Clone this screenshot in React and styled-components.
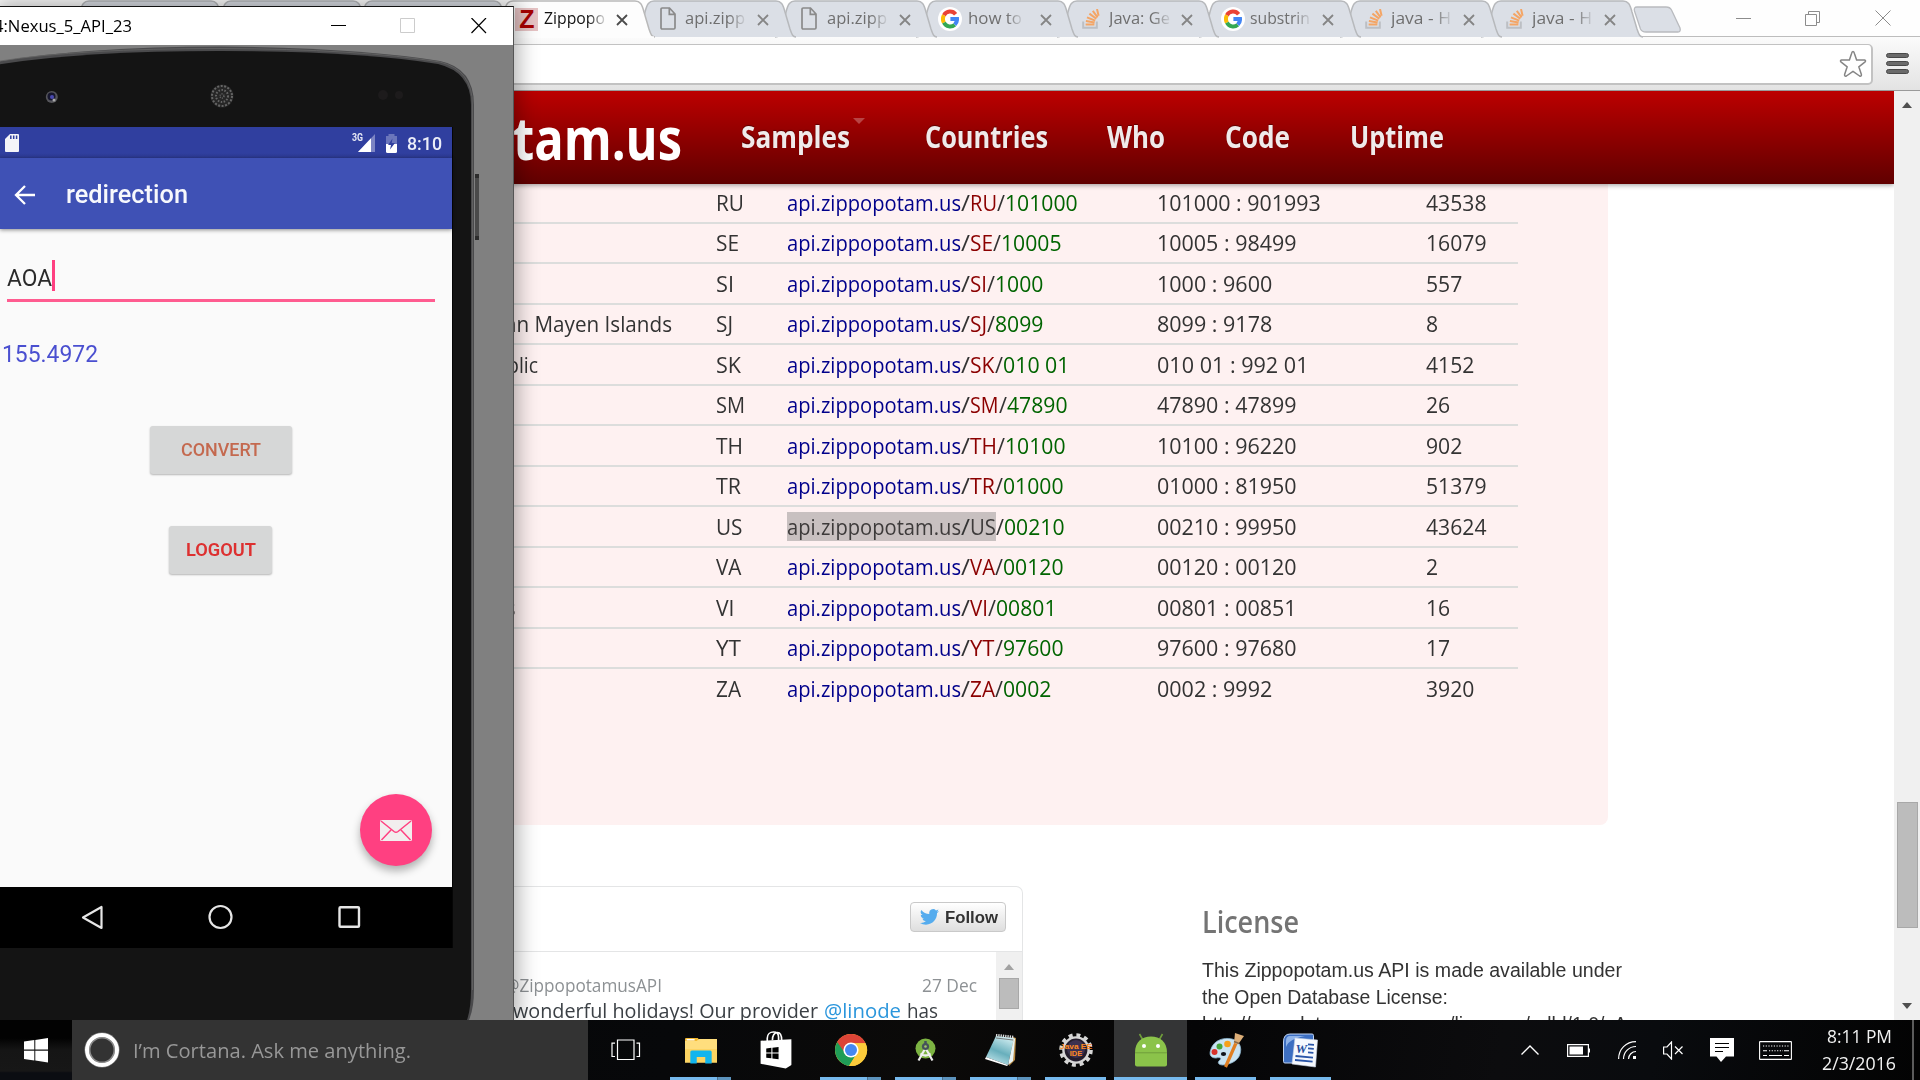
import React, { useLayoutEffect, useRef } from "react";
import styled, { createGlobalStyle, css } from "styled-components";

const SANS = '"Open Sans", "Noto Sans", sans-serif';
const ARIAL = '"Liberation Sans", Arial, sans-serif';
const ROBOTO = 'Roboto, "Noto Sans", sans-serif';

const GlobalStyle = createGlobalStyle`
  *, *::before, *::after { box-sizing: border-box; }
  html, body { margin: 0; padding: 0; background: #000; overflow: hidden; }
  svg { display: block; flex: none; }
`;

/* ---------- text that is condensed to a given width ---------- */

const FitBox = styled.span`
  display: block;
  flex: none;
  width: ${(p) => p.$w}px;
  height: ${(p) => p.$h}px;
  line-height: ${(p) => p.$h}px;
  font-family: ${(p) => p.$font || SANS};
  font-size: ${(p) => p.$size}px;
  font-weight: ${(p) => p.$weight || 400};
  color: ${(p) => p.$color || "#333"};
  white-space: pre;
`;

const FitInner = styled.span`
  display: inline-block;
  transform-origin: 0 50%;
`;

function Fit({ w, h = 30, size, weight, color, font, className, children }) {
  const ref = useRef(null);
  useLayoutEffect(() => {
    const el = ref.current;
    el.style.transform = "none";
    const natural = el.getBoundingClientRect().width;
    if (natural > 0) el.style.transform = `scaleX(${w / natural})`;
  }, [w, children]);
  return (
    <FitBox className={className} $w={w} $h={h} $size={size} $weight={weight} $color={color} $font={font}>
      <FitInner ref={ref}>{children}</FitInner>
    </FitBox>
  );
}

/* ---------- desktop ---------- */

const Desktop = styled.div`
  position: relative;
  width: 1920px;
  height: 1080px;
  overflow: hidden;
  display: flex;
  flex-direction: column;
  font-family: ${SANS};
`;

const Browser = styled.div`
  height: 1020px;
  display: flex;
  flex-direction: column;
  background: #fff;
  overflow: hidden;
`;

/* ---------- tab strip ---------- */

const TabStrip = styled.div`
  height: 36px;
  flex: none;
  display: flex;
  align-items: flex-start;
  padding-left: 69.4px;
  background: #fefefe;
  position: relative;
  z-index: 1;
`;

const Tab = styled.div`
  position: relative;
  z-index: ${(p) => p.$z};
  flex: none;
  width: 141.15px;
  height: 37px;
  display: flex;
  align-items: center;
  padding-left: 21px;
`;

const TabShape = styled.svg`
  position: absolute;
  left: 0;
  top: 0;
`;

const TabIcon = styled.span`
  position: relative;
  width: 26px;
  height: 36px;
  display: flex;
  align-items: center;
  justify-content: center;
  margin-right: 4.5px;
`;

const TabTitle = styled(Fit)`
  position: relative;
  top: -1px;
  margin-right: 11px;
  -webkit-mask-image: linear-gradient(90deg, #000 72%, rgba(0, 0, 0, 0.15) 100%);
  mask-image: linear-gradient(90deg, #000 72%, rgba(0, 0, 0, 0.15) 100%);
`;

const ZBadge = styled.span`
  width: 23px;
  height: 23px;
  margin-top: 1px;
  background: #e6c3c4;
  color: #a80000;
  font: 700 25px/23px ${ARIAL};
  text-align: center;
`;

const GBadge = styled.span`
  width: 24px;
  height: 24px;
  margin-top: 1px;
  border-radius: 50%;
  background: #fff;
  display: flex;
  align-items: center;
  justify-content: center;
`;

const TabClose = styled.svg`
  position: relative;
  margin-top: 2px;
`;

const NewTab = styled.svg`
  margin: 6px 0 0 11px;
`;

const WindowControls = styled.div`
  display: flex;
  gap: 54px;
  margin: 10px 0 0 54px;
`;

const GoogleG = () => (
  <svg width="18" height="20" viewBox="0 0 18 20" fill="none" strokeWidth="4">
    <path d="M14.6 5.2A7.2 7.6 0 0 0 2.9 6.3" stroke="#ea4335" />
    <path d="M2.9 6.3A7.4 7.6 0 0 0 2.9 13.6" stroke="#fbbc05" />
    <path d="M2.9 13.6A7.2 7.6 0 0 0 13.8 15.7" stroke="#34a853" />
    <path d="M13.8 15.7A7 7.4 0 0 0 16 9.9H9.4" stroke="#4285f4" />
  </svg>
);

const PageGlyph = () => (
  <svg width="16" height="23" viewBox="0 0 16 23" fill="none" stroke="#8a8a8a" strokeWidth="1.7">
    <path d="M1 2.2Q1 1 2.2 1H9.5L15 7V20.8Q15 22 13.8 22H2.2Q1 22 1 20.8ZM9.3 1V7.3H15" />
  </svg>
);

const StackGlyph = () => (
  <svg width="18" height="20" viewBox="0 0 18 20" fill="none">
    <path d="M1.2 12.5V18.8H14.8V12.5" stroke="#bcbfc4" strokeWidth="2" />
    <path
      d="M3.6 15.6H12.4M3.9 12L12.6 13.6M5 8.3L13.2 11.7M7.4 4.6L14.3 9.8M10.8 1.8L15.6 8.4M15 0L16.6 6.8"
      stroke="#f4a565"
      strokeWidth="2"
    />
  </svg>
);

const tabIcons = {
  z: <ZBadge>Z</ZBadge>,
  page: <PageGlyph />,
  g: (
    <GBadge>
      <GoogleG />
    </GBadge>
  ),
  so: <StackGlyph />,
};

const TABS = [
  { icon: "z", title: "Zippopo", w: 61, active: true },
  { icon: "page", title: "api.zipp", w: 60 },
  { icon: "page", title: "api.zipp", w: 60 },
  { icon: "g", title: "how to", w: 54 },
  { icon: "so", title: "Java: Ge", w: 61 },
  { icon: "g", title: "substrin", w: 60 },
  { icon: "so", title: "java - H", w: 60 },
  { icon: "so", title: "java - H", w: 60 },
];

function BrowserTab({ tab, z }) {
  const fill = tab && tab.active ? "#fdfdfd" : "#dbdfe6";
  return (
    <Tab $z={z}>
      <TabShape width="164" height="38" viewBox="0 0 164 38">
        <path
          d="M0 37C4 37 5 34 7 28L11 12C13 4 15 1 20 1H142C147 1 149 4 151 12L156 29C158 35 159 37 162 37"
          fill={fill}
          stroke={tab && tab.active ? "#b9b9b9" : "#b7b9bc"}
          strokeWidth="1.5"
        />
        {tab && tab.active && <path d="M3 37.5H161" stroke="#fdfdfd" strokeWidth="2.4" />}
      </TabShape>
      {tab && (
        <>
          <TabIcon>{tabIcons[tab.icon]}</TabIcon>
          <TabTitle w={tab.w} h={37} size={16.8} color={tab.active ? "#111" : "#6f6f6f"}>
            {tab.title}
          </TabTitle>
          <TabClose
            width="12"
            height="12"
            viewBox="0 0 12 12"
            stroke={tab.active ? "#4c4c4c" : "#858585"}
            strokeWidth="1.8"
            style={{ marginLeft: 61 - tab.w }}
          >
            <path d="M1 1L11 11M11 1L1 11" />
          </TabClose>
        </>
      )}
    </Tab>
  );
}

/* ---------- toolbar ---------- */

const Toolbar = styled.div`
  height: 55px;
  flex: none;
  display: flex;
  align-items: flex-start;
  padding-top: 7px;
  border-top: 1px solid #bdbdbd;
  border-bottom: 1px solid #9a9a9a;
  background: linear-gradient(#fbfbfb, #e3e3e3);
`;

const AddressBar = styled.div`
  width: 1873px;
  height: 41px;
  background: #fff;
  border: 2px solid #c2c2c2;
  border-top-width: 1px;
  border-radius: 5px;
  display: flex;
  justify-content: flex-end;
  padding: 5px 4px 0 0;
`;

const MenuButton = styled.div`
  display: flex;
  flex-direction: column;
  gap: 2.5px;
  margin: 9px 0 0 13px;
`;

const MenuBar = styled.span`
  width: 23px;
  height: 5.3px;
  border-radius: 2.5px;
  background: #6a6a6a;
  border: 1px solid #484848;
`;

/* ---------- page ---------- */

const PageRow = styled.div`
  height: 929px;
  display: flex;
`;

const Page = styled.div`
  width: 1894px;
  height: 929px;
  overflow: hidden;
  display: flex;
  flex-direction: column;
  background: #fff;
`;

const SiteHeader = styled.header`
  height: 93px;
  flex: none;
  position: relative;
  z-index: 1;
  display: flex;
  align-items: flex-start;
  padding-left: 513px;
  background: linear-gradient(#bc0000, #600000);
  box-shadow: 0 1px 5px rgba(0, 0, 0, 0.4);
`;

const Brand = styled(Fit)`
  margin-top: 6px;
`;

const NavItem = styled.div`
  display: flex;
  align-items: flex-start;
  margin: 20px 0 0 ${(p) => p.$gap}px;
  text-shadow: 0 -1px 1px rgba(0, 0, 0, 0.4);
`;

const Caret = styled.span`
  width: 0;
  height: 0;
  margin: 7px 0 0 3px;
  border: 6px solid transparent;
  border-bottom: 0;
  border-top-color: #b84444;
`;

const Panel = styled.section`
  width: 1608px;
  height: 641px;
  flex: none;
  padding-left: 502px;
  background: #fef1f1;
  border-bottom-right-radius: 8px;
`;

const Table = styled.div`
  margin-top: -0.8px;
  width: 1016px;
`;

const Row = styled.div`
  height: 40.5px;
  display: grid;
  grid-template-columns: 214px 71px 370px 268.5px 92.5px;
  align-items: center;
  border-bottom: 2px solid ${(p) => (p.$last ? "transparent" : "#dcdddc")};
`;

const Cell = styled.div`
  display: flex;
  padding-left: ${(p) => p.$indent || 0}px;
`;

const Selected = styled.span`
  display: flex;
  ${(p) =>
    p.$on &&
    css`
      background: #c8c0c0;
    `}
`;

const ROWS = [
  { cc: "RU", zip: "101000", range: "101000 : 901993", n: "43538", cw: 27, dw: 28 },
  { cc: "SE", zip: "10005", range: "10005 : 98499", n: "16079", cw: 23, dw: 23 },
  { cc: "SI", zip: "1000", range: "1000 : 9600", n: "557", cw: 17, dw: 18 },
  { name: "an Mayen Islands", nw: 167, ni: 3, cc: "SJ", zip: "8099", range: "8099 : 9178", n: "8", cw: 17, dw: 17 },
  { name: "blic", nw: 31, ni: 5, cc: "SK", zip: "010 01", range: "010 01 : 992 01", n: "4152", cw: 24.5, dw: 25 },
  { cc: "SM", zip: "47890", range: "47890 : 47899", n: "26", cw: 28.5, dw: 29 },
  { cc: "TH", zip: "10100", range: "10100 : 96220", n: "902", cw: 27, dw: 27 },
  { cc: "TR", zip: "01000", range: "01000 : 81950", n: "51379", cw: 25, dw: 25 },
  { cc: "US", zip: "00210", range: "00210 : 99950", n: "43624", cw: 26, dw: 26.5, sel: true },
  { cc: "VA", zip: "00120", range: "00120 : 00120", n: "2", cw: 25, dw: 25.5 },
  { name: "s", nw: 9.5, ni: 4, cc: "VI", zip: "00801", range: "00801 : 00851", n: "16", cw: 18, dw: 18.5 },
  { cc: "YT", zip: "97600", range: "97600 : 97680", n: "17", cw: 24.5, dw: 25 },
  { cc: "ZA", zip: "0002", range: "0002 : 9992", n: "3920", cw: 25, dw: 25 },
];

const textWidth = (s) =>
  [...s].reduce((sum, ch) => sum + (ch === " " ? 6 : ch === ":" ? 6.5 : 12.1), 0);

function TableRow({ row, last }) {
  const t = { h: 29, size: 21.3 };
  return (
    <Row $last={last}>
      <Cell $indent={row.ni}>{row.name && <Fit {...t} w={row.nw}>{row.name}</Fit>}</Cell>
      <Cell><Fit {...t} w={row.dw}>{row.cc}</Fit></Cell>
      <Cell>
        <Selected $on={row.sel}>
          <Fit {...t} w={174} color={row.sel ? "#3d3a3a" : "#00008b"}>api.zippopotam.us</Fit>
          <Fit {...t} w={9}>/</Fit>
          <Fit {...t} w={row.cw} color={row.sel ? "#3d3a3a" : "#8b0000"}>{row.cc}</Fit>
        </Selected>
        <Fit {...t} w={8}>/</Fit>
        <Fit {...t} w={textWidth(row.zip)} color="#006400">{row.zip}</Fit>
      </Cell>
      <Cell><Fit {...t} w={textWidth(row.range)}>{row.range}</Fit></Cell>
      <Cell><Fit {...t} w={textWidth(row.n)}>{row.n}</Fit></Cell>
    </Row>
  );
}

const Footer = styled.footer`
  flex: 1;
  display: flex;
  align-items: flex-start;
`;

const Timeline = styled.div`
  width: 1023px;
  height: 200px;
  margin-top: 61px;
  border: 1.5px solid #e4e5e6;
  border-left: 0;
  border-top-right-radius: 7px;
  display: flex;
  flex-direction: column;
`;

const TimelineHead = styled.div`
  height: 65px;
  flex: none;
  display: flex;
  justify-content: flex-end;
  padding: 15px 16px 0 0;
  border-bottom: 1.5px solid #e4e5e6;
`;

const FollowButton = styled.div`
  width: 96px;
  height: 30px;
  display: flex;
  align-items: center;
  gap: 6px;
  padding-left: 9px;
  border: 1.5px solid #c9c9c9;
  border-radius: 4px;
  background: linear-gradient(#fff, #dedede);
`;

const TimelineBody = styled.div`
  flex: 1;
  display: flex;
  justify-content: space-between;
`;

const Tweet = styled.div`
  padding: 22px 0 0 504px;
`;

const TweetMeta = styled.div`
  height: 23px;
  display: flex;
  gap: 260px;
`;

const TweetText = styled.div`
  display: flex;
  gap: 6px;
  padding-left: 9px;
`;

const Scroller = styled.div`
  width: ${(p) => p.$w}px;
  background: #f0f0f0;
  display: flex;
  flex-direction: column;
  align-items: center;
`;

const ArrowUp = styled.span`
  width: 0;
  height: 0;
  margin-top: ${(p) => p.$top}px;
  border: 5.5px solid transparent;
  border-top: 0;
  border-bottom: 6px solid ${(p) => p.$color};
`;

const ArrowDown = styled.span`
  width: 0;
  height: 0;
  border: 5.5px solid transparent;
  border-bottom: 0;
  border-top: 6px solid #4f4f4f;
`;

const Thumb = styled.span`
  width: ${(p) => p.$w}px;
  height: ${(p) => p.$h}px;
  margin: ${(p) => p.$m};
  background: #bcbcbc;
  border: 1px solid #a8a8a8;
`;

const License = styled.div`
  padding: 74px 0 0 179px;
`;

const LicenseHeading = styled(Fit)`
  margin-bottom: 13.5px;
`;

/* ---------- emulator window ---------- */

const Emulator = styled.div`
  position: absolute;
  left: 0;
  top: 6px;
  width: 514px;
  height: 1014px;
  display: flex;
  flex-direction: column;
  border-top: 1px solid #111;
  border-right: 1px solid #555;
  background: #808080;
  box-shadow: 0 0 20px 4px rgba(0, 0, 0, 0.32);
  overflow: clip;
  z-index: 2;
`;

const TitleBar = styled.div`
  height: 38px;
  flex: none;
  display: flex;
  align-items: center;
  background: #fff;
`;

const TitleText = styled(Fit)`
  margin-left: -6px;
`;

const TitleButtons = styled.svg`
  margin-left: 199px;
`;

const Phone = styled.div`
  flex: 1;
  position: relative;
`;

const PhoneBody = styled.svg`
  position: absolute;
  left: 0;
  top: 0;
`;

const Screen = styled.div`
  position: relative;
  width: 452px;
  height: 821px;
  margin-top: 82px;
  display: flex;
  flex-direction: column;
  background: #fafafa;
  font-family: ${ROBOTO};
`;

const StatusBar = styled.div`
  height: 31px;
  flex: none;
  display: flex;
  align-items: flex-start;
  padding: 7px 11px 0 5px;
  background: linear-gradient(#303f9f 26px, #2c3990 31px);
`;

const SignalLabel = styled(Fit)`
  margin: -2px -5px 0 333px;
`;

const StatusTime = styled(Fit)`
  margin-left: 9px;
`;

const AppBar = styled.div`
  height: 71px;
  flex: none;
  display: flex;
  align-items: center;
  gap: 31px;
  padding: 2px 0 0 14px;
  background: #3f51b5;
  box-shadow: 0 1px 4px rgba(0, 0, 0, 0.45);
`;

const AppBody = styled.div`
  flex: 1;
  display: flex;
  flex-direction: column;
  padding-top: 29px;
`;

const InputLine = styled.div`
  width: 428px;
  height: 44px;
  margin-left: 7px;
  display: flex;
  border-bottom: 3px solid #ff5c90;
`;

const TextCursor = styled.span`
  width: 3px;
  height: 31px;
  margin-top: 2px;
  background: #ff4081;
`;

const Result = styled(Fit)`
  margin: 37px 0 56px 2px;
`;

const MaterialButton = styled.div`
  width: ${(p) => p.$w}px;
  height: 48px;
  margin: 0 0 52px ${(p) => p.$left}px;
  display: flex;
  align-items: center;
  justify-content: center;
  border-radius: 3px;
  background: #d6d7d7;
  box-shadow: 0 1px 2px rgba(0, 0, 0, 0.28);
`;

const Fab = styled.div`
  width: 72px;
  height: 72px;
  margin: auto 20.5px 21px auto;
  display: flex;
  align-items: center;
  justify-content: center;
  border-radius: 50%;
  background: #ff4081;
  box-shadow: 0 5px 9px rgba(0, 0, 0, 0.3);
`;

const NavBar = styled.div`
  height: 61px;
  flex: none;
  background: #000;
  display: flex;
  align-items: center;
  gap: 104px;
  padding: 0 0 1px 81px;
`;

/* ---------- taskbar ---------- */

const Taskbar = styled.div`
  height: 60px;
  display: flex;
  background: linear-gradient(100deg, #050505 0%, #07080a 35%, #0b0a09 48%, #050506 62%, #0c0c0e 78%, #090b0e 86%, #030303 100%);
  position: relative;
  z-index: 3;
`;

const StartButton = styled.div`
  width: 72px;
  display: flex;
  align-items: center;
  justify-content: center;
  background: linear-gradient(#020202 30%, #151515 50%, #171717 85%, #0b0d12 88%);
`;

const Cortana = styled.div`
  width: 516px;
  display: flex;
  align-items: center;
  gap: 14px;
  padding-left: 13px;
  background: #333;
`;

const CortanaRing = styled.span`
  width: 34px;
  height: 34px;
  border-radius: 50%;
  border: 4px solid #fff;
  box-shadow: inset 0 0 0 1.5px #8a8a8a, 0 0 0 0.5px #888;
`;

const TaskSlot = styled.div`
  width: 75px;
  display: flex;
  flex-direction: column;
  align-items: center;
`;

const TaskFace = styled.div`
  width: 73px;
  height: 57px;
  padding-top: 3px;
  display: flex;
  align-items: center;
  justify-content: center;
  background: ${(p) => (p.$active ? "#343536" : "transparent")};
`;

const Underline = styled.div`
  width: ${(p) => (p.$active ? 73 : 61)}px;
  height: 3px;
  background: ${(p) =>
    p.$kind === "none"
      ? "transparent"
      : p.$kind === "multi"
      ? "linear-gradient(90deg, #76b9ed 47px, #4b6f8b 47px, #4b6f8b 48px, #5c93bd 48px)"
      : "#76b9ed"};
`;

const Tray = styled.div`
  margin-left: auto;
  display: flex;
  align-items: center;
`;

const TrayIcon = styled.svg`
  margin-left: ${(p) => p.$gap}px;
`;

const Clock = styled.div`
  width: 74px;
  height: 60px;
  margin-left: 30px;
  padding-top: 3px;
  display: flex;
  flex-direction: column;
  align-items: center;
`;

const ShowDesktop = styled.span`
  width: 2px;
  height: 60px;
  margin: 0 6px 0 16px;
  background: #5b5b5b;
`;

const TaskViewIcon = () => (
  <svg width="30" height="22" viewBox="0 0 30 22" fill="none" stroke="#fff" strokeWidth="1.2">
    <path d="M6.5 1H23V20.5H6.5ZM4 4.2H1V17.5H4M25.5 4.2H28.5V17.5H25.5" />
  </svg>
);

const FolderIcon = () => (
  <svg width="32" height="27" viewBox="0 0 30 27" preserveAspectRatio="none">
    <path d="M0 2Q0 1 1 1H12L14 4H0Z" fill="#f3b932" />
    <path d="M1.5 2H9V3.5H1.5Z" fill="#fff" />
    <path d="M0 4H11L13 2H30V25.5H0Z" fill="#ffde7d" />
    <path d="M0 12H30V25.5H0Z" fill="#fcd462" />
    <path d="M5 26.5V15Q5 13.5 6.5 13.5H23.5Q25 13.5 25 15V26.5H19V20H11V26.5Z" fill="#12b5ee" />
  </svg>
);

const StoreIcon = () => (
  <svg width="32" height="38" viewBox="0 0 31 37">
    <path d="M7 12V7C7 3 10 1 13 1C16 1 18 3 18 6V9M12 9C12 4 14 1.500 17 1.500C20 1.500 21 4 21 9" fill="none" stroke="#fff" strokeWidth="1.600" />
    <path d="M0.500 9.500L30.500 8V33L25 36.500L0.500 32Z" fill="#fff" />
    <path d="M6 17L11 16.400V21H6ZM12 16.200L18 15.500V21H12ZM6 22H11V26.500L6 26ZM12 22H18V27.500L12 26.800Z" fill="#000" />
  </svg>
);

const ChromeIcon = () => (
  <svg width="34" height="34" viewBox="0 0 34 34">
    <circle cx="17" cy="17" r="16" fill="#fcc934" />
    <path d="M17 17L3.2 9A16 16 0 0 0 15 32.9L23 20Z" fill="#1f9d57" />
    <path d="M3.2 9A16 16 0 0 1 31.6 10.3H17L11 20Z" fill="#dc4437" />
    <path d="M31.6 10.3A16 16 0 0 1 15 32.9L23 20.5L20 10.3Z" fill="#fccb3b" />
    <circle cx="17" cy="17" r="7.6" fill="#fff" />
    <circle cx="17" cy="17" r="6" fill="#4588f1" />
  </svg>
);

const StudioIcon = () => (
  <svg width="21" height="24" viewBox="0 0 21 24">
    <circle cx="10.5" cy="10.5" r="10" fill="#7cb342" />
    <path d="M10.5 10L3.500 22.500M10.500 10L17.500 22.500M5.500 15.500Q10.500 19.500 15.500 15.500" stroke="#eee" strokeWidth="2.200" fill="none" />
    <circle cx="10.5" cy="8.5" r="3.6" fill="#45525a" />
    <circle cx="10.5" cy="8.5" r="1.3" fill="#a3c76d" />
    <path d="M10.5 3V6" stroke="#45525a" strokeWidth="2.5" />
  </svg>
);

const NotepadIcon = () => (
  <svg width="34" height="33" viewBox="0 0 34 33">
    <defs>
      <linearGradient id="pad" x1="0.7" y1="0" x2="0.3" y2="1">
        <stop offset="0" stopColor="#d2eef2" />
        <stop offset="0.55" stopColor="#68afbc" />
        <stop offset="1" stopColor="#c4e6ec" />
      </linearGradient>
    </defs>
    <path d="M29 3L32 4L31 26L25 32Z" fill="#b98b44" />
    <path d="M12 2L30 4L24 31L2 23Z" fill="url(#pad)" />
    <path d="M2 23L24 31L23 32L1 25Z" fill="#fff" />
    <path d="M30 4L24 31L29 27L31 5Z" fill="#e9f4f5" />
    <path d="M12 1L30 3" stroke="#ddd" strokeWidth="2.5" strokeDasharray="1.3 1" />
    <path d="M12 4L29 6" stroke="#777" strokeWidth="1" />
  </svg>
);

const JavaIcon = () => (
  <svg width="36" height="34" viewBox="0 0 36 34">
    <circle cx="18" cy="17" r="15" fill="none" stroke="#d6d6d6" strokeWidth="3.6" strokeDasharray="4 3.85" />
    <circle cx="18" cy="17" r="12.6" fill="#241d2c" stroke="#d6d6d6" strokeWidth="2.4" />
    <circle cx="18" cy="16" r="9" fill="#3b3150" />
    <text x="18" y="15.5" textAnchor="middle" textLength="32" lengthAdjust="spacingAndGlyphs" fontFamily="Liberation Sans" fontWeight="700" fontSize="7.5" fill="#ff8a22">Java EE</text>
    <text x="18" y="23" textAnchor="middle" fontFamily="Liberation Sans" fontWeight="700" fontSize="7.5" fill="#ff8a22">IDE</text>
  </svg>
);

const AndroidIcon = () => (
  <svg width="32" height="34" viewBox="0 0 32 34">
    <path d="M8.5 8L4.5 1M23.5 8L27.5 1" stroke="#6f9d3b" strokeWidth="1.6" />
    <path d="M0 19.5C0 9 7 3.5 16 3.5S32 9 32 19.5V31.5Q32 33.5 30 33.5H2Q0 33.5 0 31.5Z" fill="#8bc34a" />
    <path d="M0 19.8H32" stroke="#6f9d3b" strokeWidth="1" />
    <circle cx="9" cy="13" r="2" fill="#fff" />
    <circle cx="23" cy="13" r="2" fill="#fff" />
  </svg>
);

const PaintIcon = () => (
  <svg width="36" height="36" viewBox="0 0 36 36">
    <path d="M3 17C6 8 16 5 24 7C32 9 34 16 32 22C30 29 23 32 15 33C10 33 9 30 12 28C14 26 12 25 8 26C2 26 1 22 3 17Z" fill="#c9e3f2" stroke="#8fb9d3" strokeWidth="0.8" />
    <circle cx="6.5" cy="20" r="3" fill="#d8322b" />
    <circle cx="11.5" cy="14.5" r="3" fill="#45a63b" />
    <circle cx="19.5" cy="12" r="3.3" fill="#f6a11b" />
    <ellipse cx="15.5" cy="22" rx="2.6" ry="2" fill="#10141a" />
    <path d="M17.5 35L28 11" stroke="#e07f22" strokeWidth="3.2" />
    <path d="M26 11L30 12.5L36 4L27 1Z" fill="#dcae78" />
    <path d="M26 9.5L31 11.5" stroke="#8b6a48" strokeWidth="1.6" />
  </svg>
);

const WordIcon = () => (
  <svg width="35" height="35" viewBox="0 0 35 35">
    <path d="M7 1H29Q30.5 1 30.5 2.5V10L27 30H2Q0.5 30 0.5 28.5V9Q0.5 1 7 1Z" fill="#3d6fc2" stroke="#c0d4f2" strokeWidth="1" />
    <path d="M3 14C5 8 12 5 22 3H7Q3 3 3 8Z" fill="#8fb3e8" />
    <path d="M12 5L34.5 7L32.5 34L9 31Z" fill="#f6f9fe" stroke="#c9d4e6" strokeWidth="0.6" />
    <text x="12.5" y="19.5" fontFamily="Liberation Serif" fontStyle="italic" fontWeight="700" fontSize="13" fill="#274f9f">W</text>
    <path d="M25 11.3L31 11.8M25 15.3L30.8 15.8M25 19.3L30.4 19.8M12.5 23L30 24.6M12 27L29.6 28.6" stroke="#2a55a8" strokeWidth="1.8" />
  </svg>
);

const TASKS = [
  { icon: <TaskViewIcon />, kind: "none" },
  { icon: <FolderIcon />, kind: "multi" },
  { icon: <StoreIcon />, kind: "none" },
  { icon: <ChromeIcon />, kind: "multi" },
  { icon: <StudioIcon />, kind: "multi" },
  { icon: <NotepadIcon />, kind: "multi" },
  { icon: <JavaIcon />, kind: "single" },
  { icon: <AndroidIcon />, kind: "single", active: true },
  { icon: <PaintIcon />, kind: "single" },
  { icon: <WordIcon />, kind: "single" },
];

const NAV = [
  { label: "Samples", w: 109, gap: 59 },
  { label: "Countries", w: 123, gap: 59.500 },
  { label: "Who", w: 58, gap: 59.500 },
  { label: "Code", w: 65, gap: 60 },
  { label: "Uptime", w: 94, gap: 59.500 },
];

function BrowserWindow() {
  return (
    <Browser>
      <TabStrip>
        <BrowserTab z={1} />
        <BrowserTab z={1} />
        <BrowserTab z={1} />
        {TABS.map((tab, i) => (
          <BrowserTab key={i} tab={tab} z={20 - i} />
        ))}
        <NewTab width="49" height="27" viewBox="0 0 49 27">
          <path d="M4 1H33Q37 1 38.5 4L47 22Q48 26 45 26H13Q9 26 7.5 23L1.5 5Q0.5 1 4 1Z" fill="#dbdfe6" stroke="#b9bbbf" strokeWidth="1.3" />
        </NewTab>
        <WindowControls>
          <svg width="15" height="16" viewBox="0 0 15 16" stroke="#8c8c8c"><path d="M0 8.5H15" /></svg>
          <svg width="16" height="17" viewBox="0 0 16 17" fill="none" stroke="#8c8c8c"><path d="M0.5 4.5H11.5V15.5H0.5ZM3.5 4.5V1.5H14.5V12.5H11.5" /></svg>
          <svg width="16" height="16" viewBox="0 0 16 16" stroke="#8c8c8c"><path d="M0.5 0.5L15.5 15.5M15.5 0.5L0.5 15.5" /></svg>
        </WindowControls>
      </TabStrip>
      <Toolbar>
        <AddressBar>
          <svg width="28" height="28" viewBox="0 0 28 28" fill="none" stroke="#858585" strokeWidth="1.5" strokeLinejoin="round">
            <path d="M14 1.5Q15 1.5 15.6 4L17.6 10H25.5Q27.4 10.5 25.8 12.2L19.8 16.8L22.4 24.5Q22.6 26.8 20.6 26L14 21.3L7.4 26Q5.4 26.8 5.6 24.5L8.2 16.8L2.2 12.2Q0.6 10.5 2.5 10H10.4L12.4 4Q13 1.5 14 1.5Z" />
          </svg>
        </AddressBar>
        <MenuButton>
          <MenuBar />
          <MenuBar />
          <MenuBar />
        </MenuButton>
      </Toolbar>
      <PageRow>
        <Page>
          <SiteHeader>
            <Brand w={169} h={80} size={59} weight={700} color="#fff">tam.us</Brand>
            {NAV.map((item, i) => (
              <React.Fragment key={item.label}>
                <NavItem $gap={item.gap}>
                  <Fit w={item.w} h={50} size={30.5} weight={700} color="#f0eaea">{item.label}</Fit>
                  {i === 0 && <Caret />}
                </NavItem>
              </React.Fragment>
            ))}
          </SiteHeader>
          <Panel>
            <Table>
              {ROWS.map((row, i) => (
                <TableRow key={row.cc} row={row} last={i === ROWS.length - 1} />
              ))}
            </Table>
          </Panel>
          <Footer>
            <Timeline>
              <TimelineHead>
                <FollowButton>
                  <svg width="19" height="16" viewBox="0 0 24 20" fill="#55acee">
                    <path d="M24 2.4a9.8 9.8 0 0 1-2.8.8A5 5 0 0 0 23.3.5a9.900 9.900 0 0 1-3.100 1.200 4.900 4.900 0 0 0-8.400 4.500A14 14 0 0 1 1.700 1a4.900 4.900 0 0 0 1.500 6.600A4.900 4.900 0 0 1 1 7v.1a4.900 4.900 0 0 0 4 4.800 5 5 0 0 1-2.200.1 4.900 4.900 0 0 0 4.600 3.400A9.900 9.900 0 0 1 0 17.500a14 14 0 0 0 7.500 2.200c9.100 0 14.300-7.700 14-14.600A10 10 0 0 0 24 2.400z" />
                  </svg>
                  <Fit w={53} h={24} size={16.5} weight={700} font={ARIAL}>Follow</Fit>
                </FollowButton>
              </TimelineHead>
              <TimelineBody>
                <Tweet>
                  <TweetMeta>
                    <Fit w={158} h={22} size={17.5} color="#8d9194">@ZippopotamusAPI</Fit>
                    <Fit w={55} h={23} size={17.5} color="#8d9194">27 Dec</Fit>
                  </TweetMeta>
                  <TweetText>
                    <Fit w={305} h={26} size={20.5} color="#3b4045">wonderful holidays! Our provider</Fit>
                    <Fit w={77} h={26} size={20.5} color="#2b96dc">@linode</Fit>
                    <Fit w={31} h={26} size={20.5} color="#3b4045">has</Fit>
                  </TweetText>
                </Tweet>
                <Scroller $w={26}>
                  <ArrowUp $top={12} $color="#a2a2a2" />
                  <Thumb $w={20} $h={31} $m="8px 0 0" />
                </Scroller>
              </TimelineBody>
            </Timeline>
            <License>
              <LicenseHeading w={97} h={44} size={30.5} weight={600} color="#747474">License</LicenseHeading>
              <Fit w={420} h={27} size={20} font={ARIAL}>This Zippopotam.us API is made available under</Fit>
              <Fit w={246} h={27} size={20} font={ARIAL}>the Open Database License:</Fit>
              <Fit w={425} h={27} size={20} font={ARIAL}>http://opendatacommons.org/licenses/odbl/1.0/. A</Fit>
            </License>
          </Footer>
        </Page>
        <Scroller $w={26}>
          <ArrowUp $top={11} $color="#4f4f4f" />
          <Thumb $w={21} $h={126} $m="694px 0 75px 1px" />
          <ArrowDown />
        </Scroller>
      </PageRow>
    </Browser>
  );
}

function EmulatorWindow() {
  return (
    <Emulator>
      <TitleBar>
        <TitleText w={138} h={40} size={17} color="#000">4:Nexus_5_API_23</TitleText>
        <TitleButtons width="156" height="16" viewBox="0 0 156 16" fill="none">
          <path d="M0 7.500H15" stroke="#000" />
          <path d="M69.500 0.500H83.500V14.500H69.500Z" stroke="#ccc" />
          <path d="M140.500 0L155 15M155 0L140.500 15" stroke="#000" strokeWidth="1.200" />
        </TitleButtons>
      </TitleBar>
      <Phone>
        <PhoneBody width="513" height="975" viewBox="0 45 513 975">
          <path d="M475 174H479V240H475Z" fill="#4a4a4a" />
          <path d="M475 174H479V178H475ZM475 236H479V240H475Z" fill="#2c2c2c" />
          <path d="M-5 62Q80 47 220 46.500Q360 48 440 61Q474 68 474 105V990Q474 1008 469 1020H-5Z" fill="#4a4a4c" />
          <path d="M-5 65Q80 51 220 51Q360 51 438 64Q471 72 471 105V990Q471 1008 467 1020H-5Z" fill="#141414" />
          <path d="M0 61Q80 48.500 220 48.500Q360 49 440 62Q472.500 70 472.500 105V990" fill="none" stroke="#666" strokeWidth="0.800" />
          <path d="M452 127H453V948H452Z" fill="#050505" />
          <circle cx="51.800" cy="97" r="6" fill="#55555a" />
          <circle cx="51.500" cy="96.500" r="4" fill="#17172f" />
          <circle cx="52" cy="97" r="2" fill="#4a4ab0" />
          <circle cx="54" cy="100" r="1.500" fill="#aaa" />
          <circle cx="222" cy="96" r="11.500" fill="#262626" />
          <circle cx="222" cy="96" r="10" fill="none" stroke="#666" strokeWidth="2" strokeDasharray="2 1.500" />
          <circle cx="222" cy="96" r="6" fill="none" stroke="#666" strokeWidth="2" strokeDasharray="1.500 1.500" />
          <circle cx="222" cy="96" r="2" fill="none" stroke="#666" strokeWidth="1.500" strokeDasharray="1 1" />
          <circle cx="383" cy="95" r="5" fill="#1d1b1c" />
          <circle cx="399" cy="95" r="4" fill="#1d1b1c" />
        </PhoneBody>
        <Screen>
          <StatusBar>
            <svg width="14" height="18" viewBox="0 0 14 18">
              <path d="M5 0H13Q14 0 14 1V17Q14 18 13 18H1Q0 18 0 17V5Z" fill="#f4f4f8" />
              <path d="M5.800 1.500V5M8.700 1.500V5M11.600 1.500V5" stroke="#303f9f" strokeWidth="1.500" />
            </svg>
            <SignalLabel w={11} h={12} size={10.500} weight={700} color="#e6e8f4" font={ROBOTO}>3G</SignalLabel>
            <svg width="17" height="18" viewBox="0 0 17 18">
              <path d="M17 0V18H0Z" fill="#7c85c3" />
              <path d="M13 4.200V18H0Z" fill="#fff" />
            </svg>
            <svg width="23" height="19" viewBox="0 0 23 19">
              <path d="M13.500 0H19.500V2H22V10.500H11V2H13.500Z" fill="#6b76bb" />
              <path d="M11 10H22V17.500Q22 19 20.500 19H12.500Q11 19 11 17.500Z" fill="#fff" />
              <path d="M17.500 4.500L13 11H16L15 15.500L20 9H16.700Z" fill="#303f9f" />
            </svg>
            <StatusTime w={35} h={19} size={18} weight={500} color="#eceef8" font={ROBOTO}>8:10</StatusTime>
          </StatusBar>
          <AppBar>
            <svg width="21" height="20" viewBox="0 0 21 20" fill="none" stroke="#fff" strokeWidth="2.300">
              <path d="M11 1L2 10L11 19M1.500 10H21" />
            </svg>
            <Fit w={122} h={40} size={25} weight={500} color="#f7f8fc" font={ROBOTO}>redirection</Fit>
          </AppBar>
          <AppBody>
            <InputLine>
              <Fit w={45} h={41} size={23} color="#2b2b2b" font={ROBOTO}>AOA</Fit>
              <TextCursor />
            </InputLine>
            <Result w={96} h={31} size={23.500} color="#4a4fd0" font={ROBOTO}>155.4972</Result>
            <MaterialButton $w={142} $left={149.500}>
              <Fit w={80} h={46} size={18} weight={500} color="#c4694f" font={ROBOTO}>CONVERT</Fit>
            </MaterialButton>
            <MaterialButton $w={103} $left={169}>
              <Fit w={70} h={46} size={18} weight={600} color="#dd3030" font={ROBOTO}>LOGOUT</Fit>
            </MaterialButton>
            <Fab>
              <svg width="32" height="23" viewBox="0 0 32 23">
                <rect x="0" y="1" width="32" height="21" rx="1.500" fill="#f2eeee" />
                <path d="M1 2L14 12.500Q16 14 18 12.500L31 2M1.500 21L11 11M30.500 21L21 11" fill="none" stroke="#ff4081" strokeWidth="1.500" />
              </svg>
            </Fab>
          </AppBody>
          <NavBar>
            <svg width="22" height="25" viewBox="0 0 22 25" fill="none" stroke="#e6e6e6" strokeWidth="2.200" strokeLinejoin="round"><path d="M20.500 2V23L2 12.500Z" /></svg>
            <svg width="26" height="26" viewBox="0 0 26 26" fill="none" stroke="#e6e6e6" strokeWidth="2.200"><circle cx="13.500" cy="13" r="11" /></svg>
            <svg width="24" height="22" viewBox="0 0 24 22" fill="none" stroke="#e6e6e6" strokeWidth="2.400"><rect x="2.500" y="1.200" width="19.500" height="19.500" rx="1" /></svg>
          </NavBar>
        </Screen>
      </Phone>
    </Emulator>
  );
}

function SystemTaskbar() {
  return (
    <Taskbar>
      <StartButton>
        <svg width="24" height="25" viewBox="0 0 24 25" fill="#fff">
          <path d="M0 3.500L10.300 2V11.500H0ZM11.300 1.900L24 0V11.500H11.300ZM0 12.700H10.300V22.500L0 21ZM11.300 12.700H24V24.500L11.300 22.600Z" />
        </svg>
      </StartButton>
      <Cortana>
        <CortanaRing />
        <Fit w={278} h={61} size={20.500} color="#989898">I’m Cortana. Ask me anything.</Fit>
      </Cortana>
      {TASKS.map((task, i) => (
        <TaskSlot key={i}>
          <TaskFace $active={task.active}>{task.icon}</TaskFace>
          <Underline $active={task.active} $kind={task.kind} />
        </TaskSlot>
      ))}
      <Tray>
        <TrayIcon $gap={0} width="18" height="12" viewBox="0 0 18 12" fill="none" stroke="#fff" strokeWidth="1.400"><path d="M0.500 10.500L9 2L17.500 10.500" /></TrayIcon>
        <TrayIcon $gap={28} width="23" height="13" viewBox="0 0 23 13" fill="none" stroke="#fff" strokeWidth="1.200"><path d="M0.600 0.600H21.400V12.400H0.600Z" /><path d="M2.500 2.500H16V10.500H2.500ZM21.500 4.500H23V8.500H21.500Z" fill="#fff" stroke="none" /></TrayIcon>
        <TrayIcon $gap={28} width="18" height="18" viewBox="0 0 18 18" fill="none" stroke="#fff" strokeWidth="1.200">
          <path d="M0.600 18C0.600 8 8 0.600 18 0.600M5.500 18C5.500 11 11 5.500 18 5.500M10.500 18C10.500 14 14 10.500 18 10.500" />
          <path d="M15 15H18V18H15Z" fill="#fff" stroke="none" />
        </TrayIcon>
        <TrayIcon $gap={27} width="20" height="19" viewBox="0 0 20 19" fill="none" stroke="#fff" strokeWidth="1.200"><path d="M0.600 6H4L8.500 1V18L4 13H0.600ZM12 5.500L19.500 13M19.500 5.500L12 13" /></TrayIcon>
        <TrayIcon $gap={27} width="24" height="24" viewBox="0 0 24 24"><path d="M0 0H24V18.500H16L11 24L6.500 18.500H0Z" fill="#fff" /><path d="M5 5.500H19M5 9.500H19M5 13.500H13" stroke="#000" strokeWidth="1.200" /></TrayIcon>
        <TrayIcon $gap={25} width="33" height="19" viewBox="0 0 33 19" fill="none" stroke="#fff" strokeWidth="1.100">
          <rect x="0.600" y="0.600" width="31.800" height="17.800" rx="0.500" />
          <path d="M4 5H30" strokeDasharray="1.200 1.500" />
          <path d="M4 9.700H8M25 9.700H30M4 14.500H8M10 14.500H23M25 14.500H30" />
          <path d="M10 9.700H24" strokeDasharray="1.200 1.500" />
        </TrayIcon>
        <Clock>
          <Fit w={65} h={27} size={17.500} color="#f2f2f2">8:11 PM</Fit>
          <Fit w={74} h={26} size={17.500} color="#f2f2f2">2/3/2016</Fit>
        </Clock>
        <ShowDesktop />
      </Tray>
    </Taskbar>
  );
}

export default function App() {
  return (
    <>
      <GlobalStyle />
      <Desktop>
        <BrowserWindow />
        <EmulatorWindow />
        <SystemTaskbar />
      </Desktop>
    </>
  );
}
